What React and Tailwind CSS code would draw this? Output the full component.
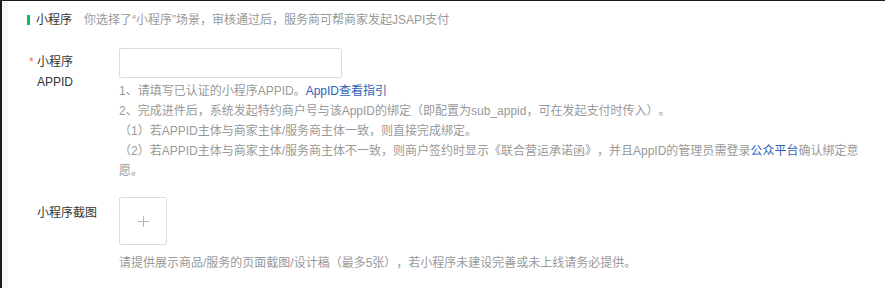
export default function App() {
    return (
        <div
            className="flex h-[288px] w-[885px] border-t border-l-2 border-[#1c1c1c] bg-[#f7f7f8] pl-[6px] text-[12px] leading-5 [text-spacing-trim:space-all]"
            style={{
                fontFamily:
                    'Arial, "Liberation Sans", "Noto Sans CJK SC", sans-serif',
            }}
        >
            <div className="flex-1 bg-white">
                <div className="flex items-center pt-[9px] pl-[19px]">
                    <span className="h-[10px] w-[3px] bg-[#07c160]" />
                    <span className="ml-[6px] text-[#333]">小程序</span>
                    <span className="ml-[12px] text-[#999]">
                        你选择了“小程序”场景，审核通过后，服务商可帮商家发起JSAPI支付
                    </span>
                </div>

                <div className="mt-[18px] flex">
                    <div className="w-[111px] shrink-0 pl-[21px] pt-[4px]">
                        <div className="flex">
                            <span className="w-[8px] text-[#f56c6c]">*</span>
                            <span className="w-[40px] text-[#333]">
                                小程序 APPID
                            </span>
                        </div>
                    </div>
                    <div className="w-[742px]">
                        <div className="h-[30px] w-[223px] rounded-[2px] border border-[#dcdcdc] bg-white" />
                        <div className="mt-[3px] text-[#999]">
                            <p>
                                1、请填写已认证的小程序APPID。
                                <span className="text-[#2d5fb8]">
                                    AppID查看指引
                                </span>
                            </p>
                            <p>
                                2、完成进件后，系统发起特约商户号与该AppID的绑定（即配置为sub_appid，可在发起支付时传入）。
                            </p>
                            <p>
                                （1）若APPID主体与商家主体/服务商主体一致，则直接完成绑定。
                            </p>
                            <p>
                                （2）若APPID主体与商家主体/服务商主体不一致，则商户签约时显示《联合营运承诺函》，并且AppID的管理员需登录
                                <span className="text-[#2d5fb8]">
                                    公众平台
                                </span>
                                确认绑定意愿。
                            </p>
                        </div>
                    </div>
                </div>

                <div className="mt-[16px] flex">
                    <div className="w-[111px] shrink-0 pl-[21px] pt-[6px]">
                        <span className="pl-[8px] text-[#333]">
                            小程序截图
                        </span>
                    </div>
                    <div>
                        <div className="flex h-[48px] w-[48px] items-center justify-center rounded-[2px] border border-[#dcdcdc] bg-white">
                            <svg
                                width="11"
                                height="11"
                                viewBox="0 0 11 11"
                            >
                                <path
                                    d="M5.5 0v11M0 5.5h11"
                                    stroke="#b5b5b5"
                                    strokeWidth="1"
                                />
                            </svg>
                        </div>
                        <p className="mt-[8px] text-[#999]">
                            请提供展示商品/服务的页面截图/设计稿（最多5张），若小程序未建设完善或未上线请务必提供。
                        </p>
                    </div>
                </div>
            </div>
        </div>
    );
}
